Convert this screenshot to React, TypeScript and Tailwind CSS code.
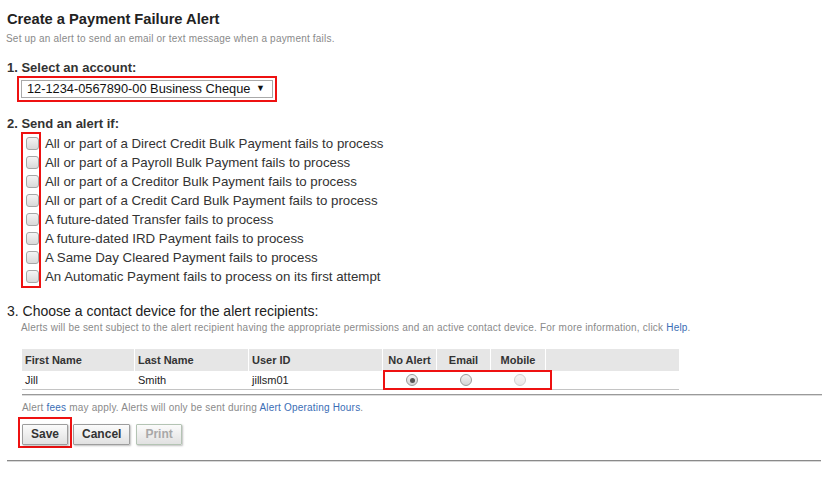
import { useState } from "react";

const alertTypes = [
  "All or part of a Direct Credit Bulk Payment fails to process",
  "All or part of a Payroll Bulk Payment fails to process",
  "All or part of a Creditor Bulk Payment fails to process",
  "All or part of a Credit Card Bulk Payment fails to process",
  "A future-dated Transfer fails to process",
  "A future-dated IRD Payment fails to process",
  "A Same Day Cleared Payment fails to process",
  "An Automatic Payment fails to process on its first attempt",
];

function Checkbox() {
  return (
    <span className="block h-[13px] w-[13px] rounded-[3px] border border-[#a6a6a6] bg-gradient-to-b from-[#f4f4f4] to-[#d9d9d9]" />
  );
}

function Radio({ state }: { state: "on" | "off" | "disabled" }) {
  if (state === "disabled") {
    return (
      <span className="block h-[12px] w-[12px] rounded-full border border-[#cfcfcf] bg-gradient-to-b from-[#f6f6f6] to-[#e8e8e8]" />
    );
  }
  return (
    <span className="flex h-[12px] w-[12px] items-center justify-center rounded-full border border-[#9a9a9a] bg-gradient-to-b from-[#f2f2f2] to-[#d4d4d4]">
      {state === "on" && <span className="block h-[5px] w-[5px] rounded-full bg-[#555]" />}
    </span>
  );
}

function Button({ label, disabled }: { label: string; disabled?: boolean }) {
  return (
    <button
      className={
        "h-[21px] rounded-[1px] border bg-gradient-to-b from-[#fbfbfb] to-[#e1e1e1] px-[8px] pb-[1px] text-[12px] font-bold leading-none shadow-[1px_1px_2px_rgba(0,0,0,0.25)] " +
        (disabled ? "border-[#b4c4b4] text-[#a8a8a8]" : "border-[#9d9d9d] text-[#333]")
      }
    >
      {label}
    </button>
  );
}

export default function App() {
  const [account] = useState("12-1234-0567890-00 Business Cheque");

  return (
    <div className="h-[500px] w-[837px] bg-white font-['Liberation_Sans',Arial,sans-serif] text-[#333]">
      <div className="flex flex-col pt-[10px]">
        <h1 className="pl-[7px] text-[14.7px] font-bold leading-[18px] text-[#222]">
          Create a Payment Failure Alert
        </h1>
        <p className="mt-[5px] pl-[6px] text-[10px] leading-[12px] tracking-[0.2px] text-[#8a8a8a]">
          Set up an alert to send an email or text message when a payment fails.
        </p>

        <h2 className="mt-[15px] pl-[7px] text-[13px] font-bold leading-[16px] text-[#333]">
          1. Select an account:
        </h2>
        <div className="ml-[17px] w-[260px] border-2 border-[#ee1111] px-[2px] py-[2px]">
          <div className="flex h-[18px] items-center justify-between border border-[#a9a9a9] bg-white pl-[5px] pr-[7px] text-[12.8px] text-[#111]">
            <span>{account}</span>
            <span className="text-[9px]">▼</span>
          </div>
        </div>

        <h2 className="mt-[14px] pl-[7px] text-[13px] font-bold leading-[16px] text-[#333]">
          2. Send an alert if:
        </h2>
        <div className="ml-[21px] flex">
          <div className="flex w-[20px] flex-col border-2 border-[#ee1111]">
            {alertTypes.map((t) => (
              <div key={t} className="flex h-[19px] items-center pl-[3px]">
                <Checkbox />
              </div>
            ))}
          </div>
          <div className="flex flex-col pt-[2px] pl-[4px]">
            {alertTypes.map((t) => (
              <div key={t} className="flex h-[19px] items-center text-[13.3px] text-[#333]">
                {t}
              </div>
            ))}
          </div>
        </div>

        <h2 className="mt-[15px] pl-[7px] text-[14px] leading-[17px] text-[#222]">
          3. Choose a contact device for the alert recipients:
        </h2>
        <p className="mt-[2px] pl-[21px] text-[10px] leading-[12px] tracking-[0.2px] text-[#8a8a8a]">
          Alerts will be sent subject to the alert recipient having the appropriate permissions and an
          active contact device. For more information, click{" "}
          <span className="text-[#3a6db5]">Help</span>.
        </p>

        <div className="ml-[22px] mt-[15px] w-[657px]">
          <div className="grid h-[22px] grid-cols-[112px_113px_133px_53px_53px_54px_1fr] gap-x-[1px] text-[11px] font-bold text-[#333]">
            <div className="flex items-center bg-[#e6e6e6] pl-[3px]">First Name</div>
            <div className="flex items-center bg-[#e6e6e6] pl-[3px]">Last Name</div>
            <div className="flex items-center bg-[#e6e6e6] pl-[3px]">User ID</div>
            <div className="flex items-center justify-center bg-[#e6e6e6]">No Alert</div>
            <div className="flex items-center justify-center bg-[#e6e6e6]">Email</div>
            <div className="flex items-center justify-center bg-[#e6e6e6]">Mobile</div>
            <div className="bg-[#e6e6e6]" />
          </div>
          <div className="grid h-[19px] grid-cols-[112px_113px_133px_161px_1fr] gap-x-[1px] border-b border-[#c4c4c4] text-[11px] text-[#222]">
            <div className="flex items-center pl-[3px]">Jill</div>
            <div className="flex items-center pl-[3px]">Smith</div>
            <div className="flex items-center pl-[3px]">jillsm01</div>
            <div className="relative grid grid-cols-[53px_54px_54px]">
              <div className="flex items-center justify-center pl-[5px]">
                <Radio state="on" />
              </div>
              <div className="flex items-center justify-center pl-[5px]">
                <Radio state="off" />
              </div>
              <div className="flex items-center justify-center pl-[5px]">
                <Radio state="disabled" />
              </div>
              <div className="absolute left-0 top-[-1px] h-[20px] w-[169px] border-2 border-[#ee1111]" />
            </div>
            <div />
          </div>
        </div>

        <div className="ml-[22px] mt-[4px] h-[2px] w-[800px] border-t border-[#9a9a9a] bg-[#dcdcdc]" />

        <p className="mt-[6px] pl-[22px] text-[10px] leading-[12px] tracking-[0.2px] text-[#8a8a8a]">
          Alert <span className="text-[#3a6db5]">fees</span> may apply. Alerts will only be sent during{" "}
          <span className="text-[#3a6db5]">Alert Operating Hours</span>.
        </p>

        <div className="ml-[18px] mt-[3px] flex items-center">
          <div className="border-2 border-[#ee1111] px-[2px] pt-[2px] pb-[1px]">
            <Button label="Save" />
          </div>
          <div className="ml-[1px]">
            <Button label="Cancel" />
          </div>
          <div className="ml-[6px]">
            <Button label="Print" disabled />
          </div>
        </div>

        <div className="ml-[7px] mt-[12px] h-[2px] w-[814px] border-t border-[#8a8a8a] bg-[#d8d8d8]" />
      </div>
    </div>
  );
}
